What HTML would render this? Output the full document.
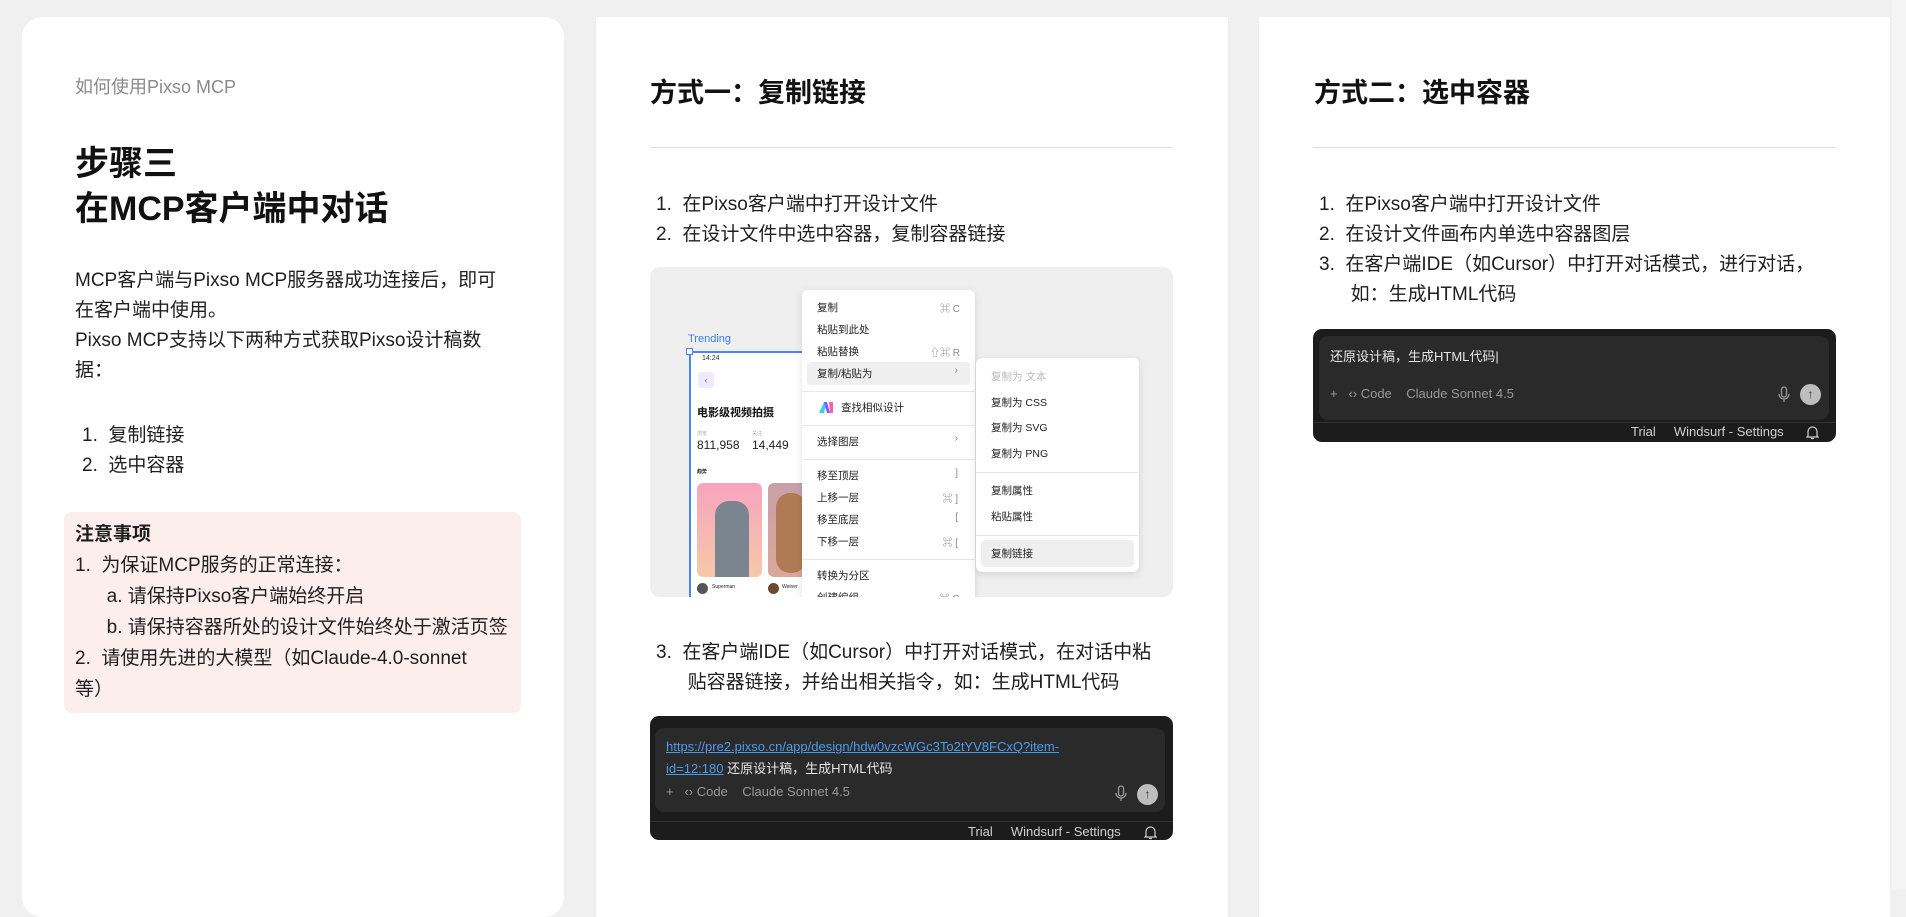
<!DOCTYPE html>
<html><head><meta charset="utf-8"><style>
*{margin:0;padding:0;box-sizing:border-box}
body{width:1906px;height:890px;overflow:hidden;background:#f0f0f0;font-family:"Liberation Sans","Noto Sans CJK SC",sans-serif;color:#1f1f1f;position:relative}
.a{position:absolute;white-space:nowrap}
.card{position:absolute;background:#fff;top:17px;height:900px}
.t19{font-size:19px;line-height:30px}
.div{position:absolute;height:1px;background:#ddd}
.mi{position:absolute;font-size:10.5px;color:#222;white-space:nowrap}
.sc{position:absolute;font-size:10px;color:#888;white-space:nowrap}
.dark{position:absolute;background:#1c1c1c;border-radius:9px}
.inp{position:absolute;background:#2a2a2a;border-radius:9px}
.g{color:#9a9a9a}
</style></head><body>
<div class="card" style="left:22px;width:542px;border-radius:20px"></div>
<div class="a" style="left:75px;top:73px;font-size:18px;color:#8a8a8a">如何使用Pixso MCP</div>
<div class="a" style="left:75px;top:142px;font-size:34px;line-height:45px;font-weight:bold;color:#111">步骤三<br>在MCP客户端中对话</div>
<div class="a t19" style="left:75px;top:266px">MCP客户端与Pixso MCP服务器成功连接后，即可<br>在客户端中使用。<br>Pixso MCP支持以下两种方式获取Pixso设计稿数<br>据：</div>
<div class="a t19" style="left:82px;top:421px">1.&nbsp; 复制链接<br>2.&nbsp; 选中容器</div>
<div style="position:absolute;left:64px;top:512px;width:457px;height:201px;background:#fdeeee;border-radius:8px"></div>
<div class="a" style="left:75px;top:519px;font-size:19px;line-height:31px"><b>注意事项</b><br>1.&nbsp; 为保证MCP服务的正常连接：<br>&nbsp;&nbsp;&nbsp;&nbsp;&nbsp; a. 请保持Pixso客户端始终开启<br>&nbsp;&nbsp;&nbsp;&nbsp;&nbsp; b. 请保持容器所处的设计文件始终处于激活页签<br>2.&nbsp; 请使用先进的大模型（如Claude-4.0-sonnet<br>等）</div>

<div class="card" style="left:596px;width:632px"></div>
<div class="a" style="left:650px;top:71px;font-size:27px;font-weight:bold;color:#111">方式一：复制链接</div>
<div class="div" style="left:650px;top:147px;width:523px"></div>
<div class="a t19" style="left:656px;top:190px">1.&nbsp; 在Pixso客户端中打开设计文件<br>2.&nbsp; 在设计文件中选中容器，复制容器链接</div>
<div style="position:absolute;left:650px;top:267px;width:523px;height:330px;background:#efefef;border-radius:10px;overflow:hidden">
  <div class="a" style="left:38px;top:66px;font-size:11px;color:#3b7bf0">Trending</div>
  <div style="position:absolute;left:39px;top:84px;width:120px;height:260px;background:#fff;border-left:2px solid #4a86f5;border-top:2px solid #4a86f5"></div>
  <div style="position:absolute;left:36px;top:81px;width:7px;height:7px;background:#fff;border:1px solid #4a86f5"></div>
  <div class="a" style="left:52px;top:88px;font-size:7px;color:#333">14:24</div>
  <div style="position:absolute;left:48px;top:105px;width:16px;height:16px;background:#efeafc;border-radius:3px;color:#8a6df0;font-size:9px;text-align:center;line-height:16px">‹</div>
  <div class="a" style="left:47px;top:137px;font-size:11px;font-weight:bold;color:#111">电影级视频拍摄</div>
  <div class="a" style="left:47px;top:163px;font-size:5px;color:#aaa">浏览</div>
  <div class="a" style="left:102px;top:163px;font-size:5px;color:#aaa">关注</div>
  <div class="a" style="left:47px;top:171px;font-size:12px;color:#222">811,958</div>
  <div class="a" style="left:102px;top:171px;font-size:12px;color:#222">14,449</div>
  <div class="a" style="left:47px;top:201px;font-size:5px;font-weight:bold">趋势</div>
  <div style="position:absolute;left:47px;top:216px;width:65px;height:94px;border-radius:6px;background:linear-gradient(#f7a4bf,#f6c8a8)"><div style="position:absolute;left:18px;top:18px;width:34px;height:76px;background:#7a8590;border-radius:14px 14px 0 0"></div></div>
  <div style="position:absolute;left:118px;top:216px;width:40px;height:94px;border-radius:6px 0 0 6px;background:linear-gradient(#c9a0a8,#d9a89a)"><div style="position:absolute;left:8px;top:10px;width:30px;height:80px;background:#b07a55;border-radius:14px"></div></div>
  <div style="position:absolute;left:47px;top:316px;width:11px;height:11px;border-radius:50%;background:#555"></div>
  <div class="a" style="left:62px;top:317px;font-size:5px">Superman</div>
  <div style="position:absolute;left:118px;top:316px;width:11px;height:11px;border-radius:50%;background:#6b4a35"></div>
  <div class="a" style="left:132px;top:317px;font-size:5px">Weiner</div>
  <div style="position:absolute;left:152px;top:23px;width:173px;height:320px;background:#fff;border-radius:6px;box-shadow:0 2px 8px rgba(0,0,0,.12)"></div>
  <div style="position:absolute;left:157px;top:95px;width:163px;height:23px;background:#efefef;border-radius:4px"></div>
  <div class="mi" style="left:167px;top:33px">复制</div><div class="sc" style="right:213px;top:33px">⌘ C</div>
  <div class="mi" style="left:167px;top:55px">粘贴到此处</div>
  <div class="mi" style="left:167px;top:77px">粘贴替换</div><div class="sc" style="right:213px;top:77px">⇧⌘ R</div>
  <div class="mi" style="left:167px;top:99px">复制/粘贴为</div><div class="sc" style="right:215px;top:98px">›</div>
  <div style="position:absolute;left:152px;top:124px;width:173px;height:1px;background:#e8e8e8"></div>
  <svg style="position:absolute;left:168px;top:134px" width="16" height="13" viewBox="0 0 16 13"><path d="M1 12 L6 1 L9 1 L6 12Z" fill="#3ad1e6"/><path d="M6 1 L9 1 L12 12 L9 12Z" fill="#7b5cff"/><path d="M11 1 L15 1 L15 12 L12 12Z" fill="#ff5fa2"/></svg>
  <div class="mi" style="left:191px;top:133px">查找相似设计</div>
  <div style="position:absolute;left:152px;top:158px;width:173px;height:1px;background:#e8e8e8"></div>
  <div class="mi" style="left:167px;top:167px">选择图层</div><div class="sc" style="right:215px;top:166px">›</div>
  <div style="position:absolute;left:152px;top:192px;width:173px;height:1px;background:#e8e8e8"></div>
  <div class="mi" style="left:167px;top:201px">移至顶层</div><div class="sc" style="right:215px;top:201px">]</div>
  <div class="mi" style="left:167px;top:223px">上移一层</div><div class="sc" style="right:215px;top:223px">⌘ ]</div>
  <div class="mi" style="left:167px;top:245px">移至底层</div><div class="sc" style="right:215px;top:245px">[</div>
  <div class="mi" style="left:167px;top:267px">下移一层</div><div class="sc" style="right:215px;top:267px">⌘ [</div>
  <div style="position:absolute;left:152px;top:292px;width:173px;height:1px;background:#e8e8e8"></div>
  <div class="mi" style="left:167px;top:301px">转换为分区</div>
  <div class="mi" style="left:167px;top:323px">创建编组</div><div class="sc" style="right:213px;top:323px">⌘ G</div>
  <div style="position:absolute;left:326px;top:91px;width:163px;height:214px;background:#fff;border-radius:6px;box-shadow:0 2px 8px rgba(0,0,0,.12)"></div>
  <div class="mi" style="left:341px;top:102px;color:#bbb">复制为 文本</div>
  <div class="mi" style="left:341px;top:128px">复制为 CSS</div>
  <div class="mi" style="left:341px;top:153px">复制为 SVG</div>
  <div class="mi" style="left:341px;top:179px">复制为 PNG</div>
  <div style="position:absolute;left:326px;top:205px;width:163px;height:1px;background:#e8e8e8"></div>
  <div class="mi" style="left:341px;top:216px">复制属性</div>
  <div class="mi" style="left:341px;top:242px">粘贴属性</div>
  <div style="position:absolute;left:326px;top:268px;width:163px;height:1px;background:#e8e8e8"></div>
  <div style="position:absolute;left:331px;top:273px;width:153px;height:27px;background:#efefef;border-radius:4px"></div>
  <div class="mi" style="left:341px;top:279px">复制链接</div>
</div>
<div class="a t19" style="left:656px;top:638px">3.&nbsp; 在客户端IDE（如Cursor）中打开对话模式，在对话中粘<br>&nbsp;&nbsp;&nbsp;&nbsp;&nbsp; 贴容器链接，并给出相关指令，如：生成HTML代码</div>
<div class="dark" style="left:650px;top:716px;width:523px;height:124px"></div>
<div class="inp" style="left:655px;top:728px;width:510px;height:84px"></div>
<div class="a" style="left:666px;top:736px;font-size:13px;line-height:22px;color:#e6e6e6"><span style="color:#4a9cf0;text-decoration:underline">https://pre2.pixso.cn/app/design/hdw0vzcWGc3To2tYV8FCxQ?item-</span><br><span style="color:#4a9cf0;text-decoration:underline">id=12:180</span> 还原设计稿，生成HTML代码</div>
<div class="a g" style="left:666px;top:784px;font-size:13px">+&nbsp;&nbsp;&nbsp;‹› Code&nbsp;&nbsp;&nbsp;&nbsp;Claude Sonnet 4.5</div>
<svg style="position:absolute;left:1115px;top:785px" width="12" height="17" viewBox="0 0 12 17" fill="none" stroke="#9a9a9a" stroke-width="1.3"><rect x="3.5" y="1" width="5" height="10" rx="2.5"/><path d="M1 8a5 5 0 0 0 10 0M6 13v3"/></svg>
<div style="position:absolute;left:1137px;top:784px;width:21px;height:21px;border-radius:50%;background:#bdbdbd;color:#333;font-size:12px;text-align:center;line-height:21px">↑</div>
<div style="position:absolute;left:650px;top:821px;width:523px;height:1px;background:#333"></div>
<div class="a" style="left:968px;top:824px;font-size:13px;color:#cfcfcf">Trial&nbsp;&nbsp;&nbsp;&nbsp;&nbsp;Windsurf - Settings</div>
<svg style="position:absolute;left:1144px;top:825px" width="13" height="15" viewBox="0 0 13 15" fill="none" stroke="#cfcfcf" stroke-width="1.2"><path d="M2 11V6.5a4.5 4.5 0 0 1 9 0V11l1 1H1z"/><path d="M5 13.5h3"/></svg>

<div class="card" style="left:1259px;width:631px"></div>
<div class="a" style="left:1314px;top:71px;font-size:27px;font-weight:bold;color:#111">方式二：选中容器</div>
<div class="div" style="left:1313px;top:147px;width:523px"></div>
<div class="a t19" style="left:1319px;top:190px">1.&nbsp; 在Pixso客户端中打开设计文件<br>2.&nbsp; 在设计文件画布内单选中容器图层<br>3.&nbsp; 在客户端IDE（如Cursor）中打开对话模式，进行对话，<br>&nbsp;&nbsp;&nbsp;&nbsp;&nbsp; 如：生成HTML代码</div>
<div class="dark" style="left:1313px;top:329px;width:523px;height:113px"></div>
<div class="inp" style="left:1319px;top:336px;width:510px;height:84px"></div>
<div class="a" style="left:1330px;top:346px;font-size:13px;color:#e6e6e6">还原设计稿，生成HTML代码|</div>
<div class="a g" style="left:1330px;top:386px;font-size:13px">+&nbsp;&nbsp;&nbsp;‹› Code&nbsp;&nbsp;&nbsp;&nbsp;Claude Sonnet 4.5</div>
<svg style="position:absolute;left:1778px;top:386px" width="12" height="17" viewBox="0 0 12 17" fill="none" stroke="#9a9a9a" stroke-width="1.3"><rect x="3.5" y="1" width="5" height="10" rx="2.5"/><path d="M1 8a5 5 0 0 0 10 0M6 13v3"/></svg>
<div style="position:absolute;left:1800px;top:384px;width:21px;height:21px;border-radius:50%;background:#bdbdbd;color:#333;font-size:12px;text-align:center;line-height:21px">↑</div>
<div style="position:absolute;left:1313px;top:422px;width:523px;height:1px;background:#333"></div>
<div class="a" style="left:1631px;top:424px;font-size:13px;color:#cfcfcf">Trial&nbsp;&nbsp;&nbsp;&nbsp;&nbsp;Windsurf - Settings</div>
<svg style="position:absolute;left:1806px;top:425px" width="13" height="15" viewBox="0 0 13 15" fill="none" stroke="#cfcfcf" stroke-width="1.2"><path d="M2 11V6.5a4.5 4.5 0 0 1 9 0V11l1 1H1z"/><path d="M5 13.5h3"/></svg>
<div style="position:absolute;left:1892px;top:0;width:14px;height:890px;background:#f5f5f5"></div>
</body></html>
